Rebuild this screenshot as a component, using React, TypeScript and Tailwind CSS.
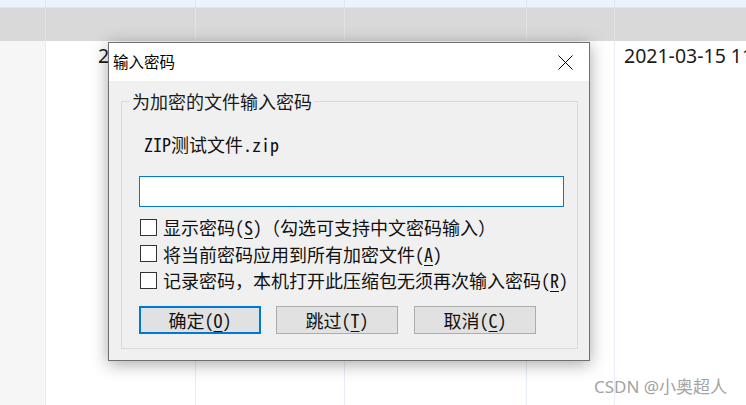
import React from "react";

const widths = ["w-[46px]", "w-[150px]", "w-[149px]", "w-[182px]", "w-[88px]"];

function GridRow({ className, line, first, children }: { className: string; line: string; first?: string; children?: React.ReactNode[] }) {
  return (
    <div className={`flex ${className}`}>
      {widths.map((w, i) => (
        <div key={i} className={`${w} shrink-0 border-r ${line} ${i === 0 && first ? first : ""} overflow-hidden whitespace-nowrap`}>
          {children ? children[i] : null}
        </div>
      ))}
      <div className="flex-1 overflow-hidden whitespace-nowrap">{children ? children[5] : null}</div>
    </div>
  );
}

function Key({ k }: { k: string }) {
  return (
    <>
      (<span className="underline underline-offset-[3px] decoration-1">{k}</span>)
    </>
  );
}

function Check({ children }: { children: React.ReactNode }) {
  return (
    <div className="h-[26.5px] flex items-center pl-[1px]">
      <div className="w-[17px] h-[17px] min-w-[17px] border border-[#333333] bg-white" />
      <span className="ml-[6px] text-[18px] leading-[26px] text-[#111] whitespace-nowrap">{children}</span>
    </div>
  );
}

function Btn({ children, primary, className }: { children: React.ReactNode; primary?: boolean; className?: string }) {
  return (
    <div
      className={`w-[122px] h-[28px] flex items-center justify-center bg-[#e1e1e1] text-[18px] leading-none text-[#111] ${
        primary ? "border-2 border-[#0078d7]" : "border border-[#adadad]"
      } ${className ?? ""}`}
    >
      {children}
    </div>
  );
}

export default function App() {
  const dateText = "text-[19.5px] leading-[24px] text-[#1b1b1b] font-['Noto_Sans','Open_Sans',sans-serif]";
  return (
    <div className="relative w-[746px] h-[405px] overflow-hidden bg-white">
      <div className="flex flex-col h-full">
        <GridRow className="h-[8px] bg-[#edf3fc] border-b border-[#dde7f4]" line="border-[#dae5f4]" />
        <GridRow className="h-[33px] bg-[#d9d9d9]" line="border-[#e0e3e8]" />
        <GridRow className="flex-1 bg-white" line="border-[#e6edf6]" first="bg-[#f6f6f6]">
          {[
            null,
            <div key="a" className={`pl-[52px] pt-[3px] ${dateText}`}>2</div>,
            null,
            null,
            null,
            <div key="b" className={`pl-[9px] pt-[3px] ${dateText}`}>2021-03-15 11:20</div>,
          ]}
        </GridRow>
      </div>

      {/* password dialog */}
      <div className="absolute left-[108px] top-[42px] w-[482px] h-[319px] flex flex-col border border-[#6f6f6f] bg-[#f0f0f0] shadow-[0_3px_16px_rgba(0,0,0,0.35)] font-['Noto_Sans_Mono_CJK_SC','Noto_Sans_CJK_SC',monospace]">
        <div className="h-[38px] bg-white flex items-center justify-between pl-[4px] pr-[16px]">
          <span className="text-[15.5px] text-black font-['Noto_Sans_CJK_SC',sans-serif]">输入密码</span>
          <svg width="15" height="15" viewBox="0 0 15 15">
            <path d="M0.5 0.5 L14.5 14.5 M14.5 0.5 L0.5 14.5" stroke="#000" strokeWidth="1" fill="none" />
          </svg>
        </div>
        <div className="flex-1 pl-[12px] pr-[11px] pt-[9px] pb-[11px]">
          <fieldset className="h-full min-w-0 w-[457px] border border-[#dadada] pl-[17px] pr-[13px]">
            <legend className="ml-[-9px] px-[2px] text-[18px] leading-[22px] text-[#1a1a1a]">为加密的文件输入密码</legend>
            <div className="mt-[21px] pl-[5px] h-[22px] text-[18px] leading-[22px] text-[#111]">ZIP测试文件.zip</div>
            <div className="mt-[21px] w-[425px] h-[31px] bg-white border border-[#0078d7]" />
            <div className="mt-[7px] flex flex-col">
              <Check>
                显示密码<Key k="S" />（勾选可支持中文密码输入）
              </Check>
              <Check>
                将当前密码应用到所有加密文件<Key k="A" />
              </Check>
              <Check>
                记录密码，本机打开此压缩包无须再次输入密码<Key k="R" />
              </Check>
            </div>
            <div className="mt-[12px] flex">
              <Btn primary>
                确定<Key k="O" />
              </Btn>
              <Btn className="ml-[15px]">
                跳过<Key k="T" />
              </Btn>
              <Btn className="ml-[16px]">
                取消<Key k="C" />
              </Btn>
            </div>
          </fieldset>
        </div>
      </div>

      <div className="absolute left-[594px] top-[376px] text-[17px] leading-[22px] text-[#a3a3a3] font-['Noto_Sans','Noto_Sans_CJK_SC',sans-serif]">
        CSDN @小奥超人
      </div>
    </div>
  );
}
